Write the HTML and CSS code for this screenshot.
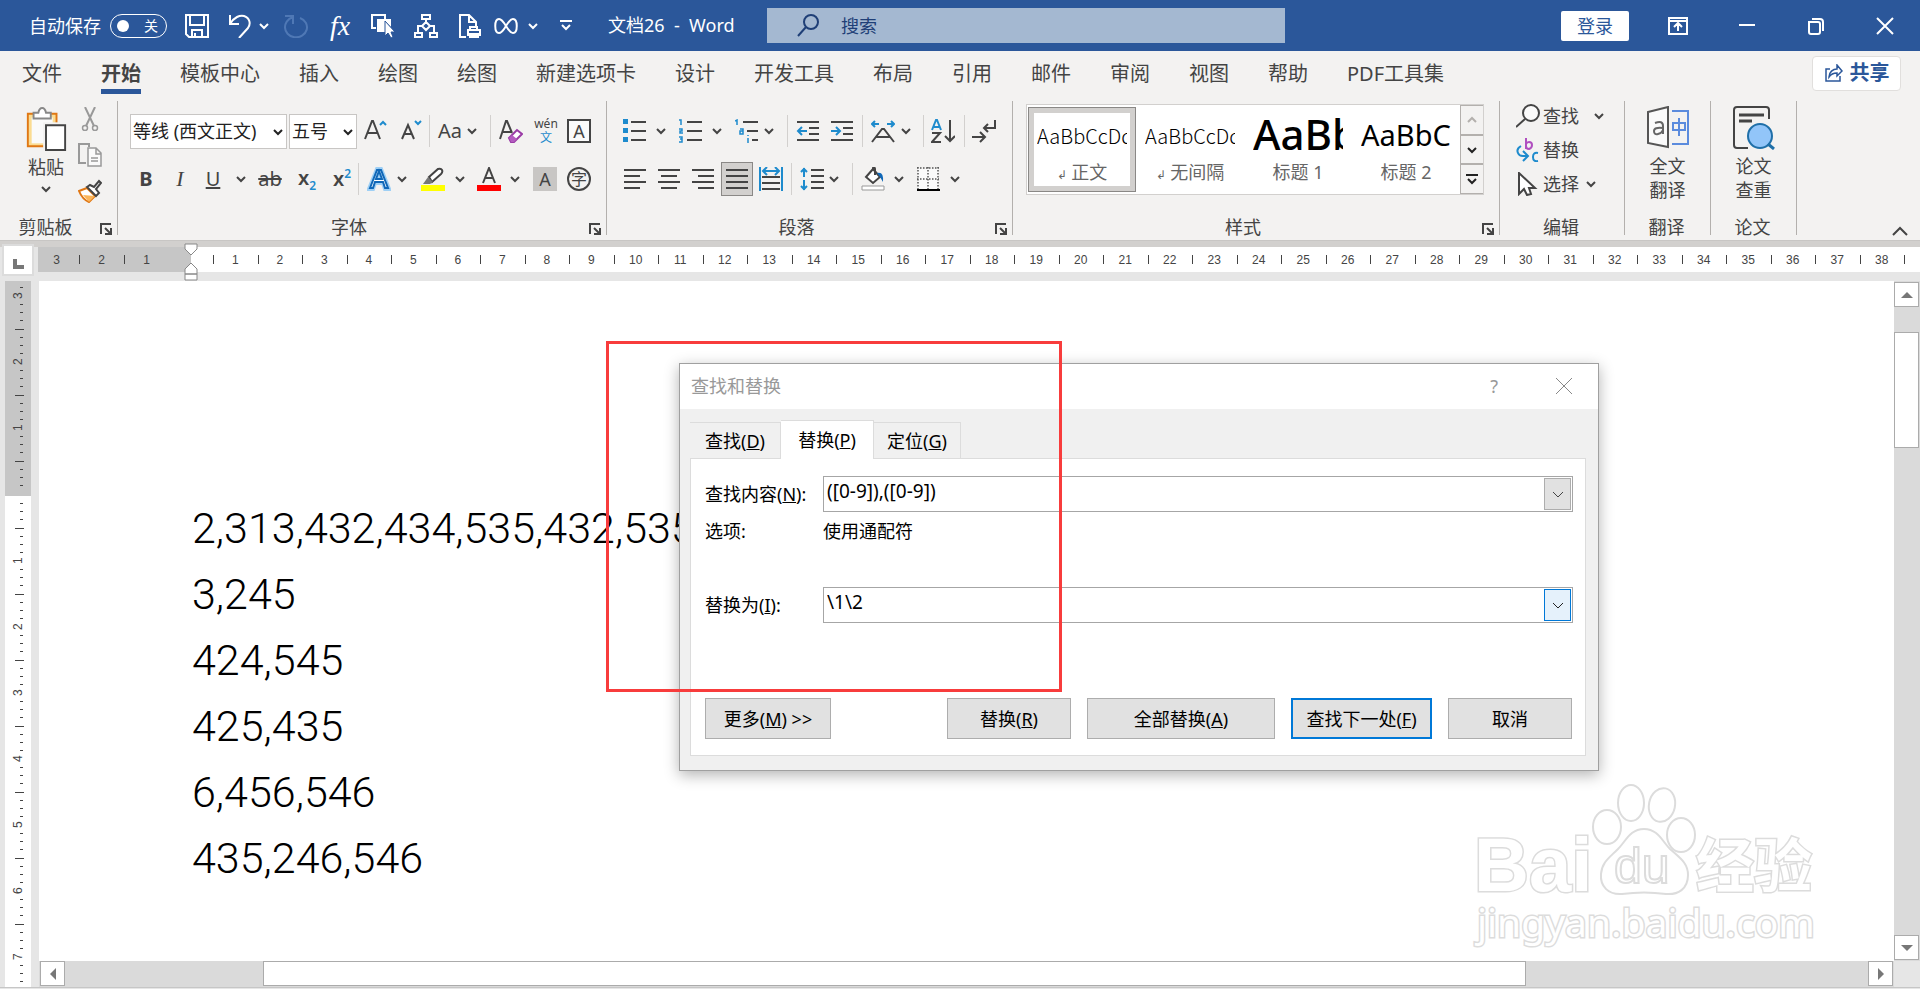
FILE: index.html
```html
<!DOCTYPE html>
<html lang="zh-CN">
<head>
<meta charset="utf-8">
<title>文档26 - Word</title>
<link rel="stylesheet" href="styles.css">
</head>
<body>
<svg class="defs" aria-hidden="true">
  <symbol id="chev" viewBox="0 0 12 12"><path d="M2 4l4 4 4-4" fill="none" stroke="currentColor" stroke-width="2"/></symbol>
  <symbol id="launch" viewBox="0 0 12 12"><path d="M1 11V1h10M5 5l5 5M11 5v6H5" fill="none" stroke="currentColor" stroke-width="2"/></symbol>
</svg>

<header class="titlebar">
  <div class="quick">
    <label class="autosave" for="autosave">自动保存</label>
    <span class="toggle"><input type="checkbox" id="autosave"><span class="knob"></span><span class="state">关</span></span>
    <button aria-label="保存"><svg class="ic" viewBox="0 0 24 24"><path d="M1 1h22v22H4l-3-3zM5 1v10h14V1M7 23v-7h10v7M10 23v-4" fill="none" stroke="#fff" stroke-width="2"/></svg></button>
    <button aria-label="撤消"><svg class="ic" viewBox="0 0 24 24"><path d="M2 1v9h9M2 10C6 3 12 1 16 2c6 2 7 8 4 12l-9 10" fill="none" stroke="#fff" stroke-width="2"/></svg></button>
    <button aria-label="撤消选项"><svg class="ch"><use href="#chev"/></svg></button>
    <button aria-label="恢复"><svg class="ic" viewBox="0 0 24 24"><path d="M1 2h8v8M9 3C3 5 1 10 1 13a11 10 0 1 0 15-9" fill="none" stroke="#4f78b5" stroke-width="2"/></svg></button>
    <button class="fx" aria-label="公式">fx</button>
    <button aria-label="选择对象"><svg class="ic" viewBox="0 0 24 24"><path d="M5 14H1V1h13v4" fill="none" stroke="#fff" stroke-width="2"/><path d="M6 5h14v8l-6-6v11H6z" fill="#fff"/><path d="M14 7v15l3-3 3 5 2-1-2-5h4z" fill="#fff" stroke="#2b579a" stroke-width="1"/></svg></button>
    <button aria-label="组织结构图"><svg class="ic" viewBox="0 0 24 24"><path d="M8 1h8v4H8zM1 19h7v4H1zM16 19h7v4h-7zM12 5v3M12 8l4 4-4 4-4-4zM8 12H4v7M16 12h4v7" fill="none" stroke="#fff" stroke-width="2"/></svg></button>
    <button aria-label="打印预览"><svg class="ic" viewBox="0 0 24 24"><path d="M8 23H2V1h9l7 7v6M11 1v7h7M10 16h12v5H10zM12 16v-3h7v3M12 20h8v3h-8z" fill="none" stroke="#fff" stroke-width="2"/></svg></button>
    <button aria-label="符号"><svg class="ic" viewBox="0 0 24 24"><path d="M12 12C9 7 7 5 5 5c-5 0-5 14 0 14 3 0 5-4 7-7s4-7 7-7c5 0 5 14 0 14-2 0-4-2-7-7z" fill="none" stroke="#fff" stroke-width="2"/></svg></button>
    <button aria-label="符号选项"><svg class="ch"><use href="#chev"/></svg></button>
    <button aria-label="自定义快速访问工具栏"><svg class="ch" viewBox="0 0 12 12"><path d="M0 1h12M2 5l4 4 4-4" fill="none" stroke="#fff" stroke-width="2"/></svg></button>
  </div>
  <h1 class="doc-title">文档26&nbsp; -&nbsp; Word</h1>
  <div class="search">
    <svg class="ic" viewBox="0 0 24 24"><path d="M14 1a7 7 0 1 1 0 14a7 7 0 1 1 0-14zM9 13L1 22" fill="none" stroke="#1f3f77" stroke-width="2"/></svg>
    <input type="text" aria-label="搜索" placeholder="搜索">
  </div>
  <div class="window-tools">
    <button class="login">登录</button>
    <button aria-label="功能区显示选项"><svg class="wi" viewBox="0 0 20 18"><path d="M1 1h18v16H1zM1 4h18M10 14V7M6 10l4-4 4 4" fill="none" stroke="#fff" stroke-width="2"/></svg></button>
    <button aria-label="最小化"><svg class="wi" viewBox="0 0 20 18"><path d="M2 8h16" stroke="#fff" stroke-width="2"/></svg></button>
    <button aria-label="还原"><svg class="wi" viewBox="0 0 20 18"><path d="M3 5h9q2 0 2 2v8q0 2-2 2H5q-2 0-2-2zM6 2h8q3 0 3 3v9" fill="none" stroke="#fff" stroke-width="2"/></svg></button>
    <button aria-label="关闭"><svg class="wi" viewBox="0 0 20 18"><path d="M2 1l16 16M18 1L2 17" stroke="#fff" stroke-width="2"/></svg></button>
  </div>
</header>

<nav class="tabs">
  <a href="#">文件</a><a href="#" class="active">开始</a><a href="#">模板中心</a><a href="#">插入</a><a href="#">绘图</a><a href="#">绘图</a><a href="#">新建选项卡</a><a href="#">设计</a><a href="#">开发工具</a><a href="#">布局</a><a href="#">引用</a><a href="#">邮件</a><a href="#">审阅</a><a href="#">视图</a><a href="#">帮助</a><a href="#">PDF工具集</a>
  <button class="share"><svg class="wi" viewBox="0 0 20 18"><path d="M6 5H2v12h14v-5M5 13c0-5 4-8 8-8V1l5 6-5 5V9c-4 0-6 1-8 4z" fill="none" stroke="#2b579a" stroke-width="1.5"/></svg>共享</button>
</nav>

<section class="ribbon">
  <div class="group clipboard">
    <div class="clip-body">
      <button class="paste"><svg class="big" viewBox="0 0 42 46"><path d="M2 7h30v34H2z" fill="#fbdc92" stroke="#e07714" stroke-width="2"/><path d="M6 11h22v27H6z" fill="#fafafa"/><path d="M8 12V6h5q1-5 4-5t4 5h5v6z" fill="#fff" stroke="#888" stroke-width="2"/><path d="M18 16h24v30H18z" fill="#f3f2f1"/><path d="M21 19h20v26H21z" fill="#fff" stroke="#444" stroke-width="2"/></svg>粘贴<svg class="ch"><use href="#chev"/></svg></button>
      <div class="clip-side">
        <button aria-label="剪切"><svg class="ic" viewBox="0 0 24 24"><path d="M7 0l9 19M17 0L8 19" fill="none" stroke="#999" stroke-width="2"/><circle cx="7" cy="21" r="2.5" fill="none" stroke="#999" stroke-width="1.5"/><circle cx="17" cy="21" r="2.5" fill="none" stroke="#999" stroke-width="1.5"/></svg></button>
        <button aria-label="复制"><svg class="ic" viewBox="0 0 24 24"><path d="M8 20H1V1h10v3" fill="none" stroke="#999" stroke-width="2"/><path d="M10 5h8l5 5v13H10zM18 5v6h5M13 15h7M13 18h7" fill="#fafafa" stroke="#999" stroke-width="1.5"/></svg></button>
        <button aria-label="格式刷"><svg class="ic" viewBox="0 0 24 24"><path d="M1 12l8-3 8 8-6 6c-5-2-8-6-10-11z" fill="#fff" stroke="#e07714" stroke-width="2"/><path d="M5 16l12 1-6 6z" fill="#fbb55a"/><path d="M9 8l3-2 4 2 5-6 2 2-5 6 3 4-3 3z" fill="#fff" stroke="#444" stroke-width="2"/></svg></button>
      </div>
    </div>
    <div class="caption"><span>剪贴板</span><button aria-label="剪贴板设置"><svg class="ch"><use href="#launch"/></svg></button></div>
  </div>

  <div class="group font">
    <div class="row font-1">
      <span class="combo"><select aria-label="字体"><option>等线 (西文正文)</option></select><svg class="ch"><use href="#chev"/></svg></span>
      <span class="combo small"><select aria-label="字号"><option>五号</option></select><svg class="ch"><use href="#chev"/></svg></span>
      <button aria-label="增大字号"><svg class="ic" viewBox="0 0 24 24"><path d="M1 20L8 2h1l7 18M4 14h9" fill="none" stroke="#444" stroke-width="2"/><path d="M16 6l3-3 3 3" fill="none" stroke="#1e8bcd" stroke-width="2"/></svg></button>
      <button aria-label="减小字号"><svg class="ic" viewBox="0 0 24 24"><path d="M2 20L8 6l6 14M4 15h8" fill="none" stroke="#444" stroke-width="2"/><path d="M15 2l3 3 3-3" fill="none" stroke="#1e8bcd" stroke-width="2"/></svg></button>
      <i class="sep"></i><i></i>
      <button class="glyph case" aria-label="更改大小写">Aa<svg class="ch"><use href="#chev"/></svg></button>
      <i class="sep"></i><i></i>
      <button aria-label="清除格式"><svg class="ic" viewBox="0 0 24 24"><path d="M1 20L7 2h1l5 12M4 13h8" fill="none" stroke="#444" stroke-width="2"/><path d="M10 19l8-8 5 4-8 8h-3z" fill="#fff" stroke="#9a3ba6" stroke-width="2"/><path d="M10 19l3-3 5 4-3 3h-3z" fill="#b45cc0"/></svg></button>
      <button class="pinyin" aria-label="拼音指南"><span>wén</span><b>文</b></button>
      <button class="boxed" aria-label="字符边框">A</button>
    </div>
    <div class="row font-2">
      <button class="glyph bold" aria-label="加粗">B</button>
      <button class="glyph ital" aria-label="倾斜">I</button>
      <button class="glyph" aria-label="下划线"><u>U</u></button>
      <button aria-label="下划线选项"><svg class="ch"><use href="#chev"/></svg></button>
      <button class="glyph" aria-label="删除线"><s>ab</s></button>
      <button class="glyph script" aria-label="下标">x<sub>2</sub></button>
      <button class="glyph script" aria-label="上标">x<sup>2</sup></button>
      <i class="sep"></i><i></i>
      <button aria-label="文本效果"><svg class="ic" viewBox="0 0 24 24"><path d="M2 22L10 2h4l8 20h-4l-2-6H8l-2 6zM9 13h6L12 5z" fill="#fff" stroke="#9fd0f5" stroke-width="4"/><path d="M3 21L10 3h4l7 18h-3l-2-6H8l-2 6zM9 12h6L12 4z" fill="#fff" stroke="#1068b8" stroke-width="2"/></svg></button>
      <button aria-label="文本效果选项"><svg class="ch"><use href="#chev"/></svg></button>
      <button aria-label="突出显示"><svg class="ic" viewBox="0 0 24 24"><path d="M0 18h24v6H0z" fill="#ff0"/><path d="M8 10l9-8q3-1 4 1t-1 4l-9 8z" fill="#fff" stroke="#444" stroke-width="2"/><path d="M7 10l5 5-3 2H2z" fill="#777"/></svg></button>
      <button aria-label="突出显示选项"><svg class="ch"><use href="#chev"/></svg></button>
      <button aria-label="字体颜色"><svg class="ic" viewBox="0 0 24 24"><path d="M0 18h24v6H0z" fill="red"/><path d="M6 16L12 1l6 15M8 11h8" fill="none" stroke="#444" stroke-width="2"/></svg></button>
      <button aria-label="字体颜色选项"><svg class="ch"><use href="#chev"/></svg></button>
      <button class="shaded" aria-label="字符底纹">A</button>
      <button class="circled" aria-label="带圈字符">字</button>
    </div>
    <div class="caption"><span>字体</span><button aria-label="字体设置"><svg class="ch"><use href="#launch"/></svg></button></div>
  </div>

  <div class="group para">
    <div class="row para-1">
      <button aria-label="项目符号"><svg class="ic" viewBox="0 0 24 24"><path d="M0 0h5v5H0zM0 9h5v5H0zM0 18h5v5H0z" fill="#1e8bcd"/><path d="M8 3h15M8 12h15M8 21h15" stroke="#444" stroke-width="2"/></svg></button>
      <button aria-label="项目符号选项"><svg class="ch"><use href="#chev"/></svg></button>
      <button aria-label="编号"><svg class="ic" viewBox="0 0 24 24"><path d="M0 1h2v5M0 10h3v2H1v2h3M0 18h3v5H0M1 20h2" fill="none" stroke="#1e8bcd" stroke-width="1.5"/><path d="M8 3h15M8 12h15M8 21h15" stroke="#444" stroke-width="2"/></svg></button>
      <button aria-label="编号选项"><svg class="ch"><use href="#chev"/></svg></button>
      <button aria-label="多级列表"><svg class="ic" viewBox="0 0 24 24"><path d="M0 2l2-1v5M5 10h3v5H5v-3h3M13 19v5M13 16v1" fill="none" stroke="#1e8bcd" stroke-width="1.5"/><path d="M8 3h15M12 12h11M17 21h6" stroke="#444" stroke-width="2"/></svg></button>
      <button aria-label="多级列表选项"><svg class="ch"><use href="#chev"/></svg></button>
      <i class="sep"></i><i></i>
      <button aria-label="减少缩进量"><svg class="ic" viewBox="0 0 24 24"><path d="M1 3h22M13 9h10M13 15h10M1 21h22" stroke="#444" stroke-width="2"/><path d="M11 12H2M6 8l-4 4 4 4" fill="none" stroke="#1e8bcd" stroke-width="2"/></svg></button>
      <button aria-label="增加缩进量"><svg class="ic" viewBox="0 0 24 24"><path d="M1 3h22M13 9h10M13 15h10M1 21h22" stroke="#444" stroke-width="2"/><path d="M1 12h9M6 8l4 4-4 4" fill="none" stroke="#1e8bcd" stroke-width="2"/></svg></button>
      <i class="sep"></i><i></i>
      <button aria-label="中文版式"><svg class="ic" viewBox="0 0 24 24"><path d="M1 23L11 10h2l10 13M5 18h14" fill="none" stroke="#444" stroke-width="2"/><path d="M8 5H1M4 2L1 5l3 3M16 5h7M20 2l3 3-3 3" fill="none" stroke="#1e8bcd" stroke-width="2"/></svg></button>
      <button aria-label="中文版式选项"><svg class="ch"><use href="#chev"/></svg></button>
      <i class="sep"></i><i></i>
      <button aria-label="排序"><svg class="ic" viewBox="0 0 24 24"><path d="M1 11L5 1h1l4 10M3 8h5" fill="none" stroke="#1e8bcd" stroke-width="2"/><path d="M1 14h8l-8 9h9M19 1v21M14 17l5 5 5-5" fill="none" stroke="#444" stroke-width="2"/></svg></button>
      <i class="sep"></i><i></i>
      <button aria-label="显示编辑标记"><svg class="ic" viewBox="0 0 24 24"><path d="M23 1v8H12M16 5l-4 4 4 4M0 18h12M8 13l5 5-5 5" fill="none" stroke="#444" stroke-width="2"/></svg></button>
    </div>
    <div class="row para-2">
      <button aria-label="左对齐"><svg class="ic" viewBox="0 0 24 24"><path d="M1 3h22M1 9h16M1 15h22M1 21h16" stroke="#444" stroke-width="2"/></svg></button>
      <button aria-label="居中"><svg class="ic" viewBox="0 0 24 24"><path d="M1 3h22M4 9h16M1 15h22M4 21h16" stroke="#444" stroke-width="2"/></svg></button>
      <button aria-label="右对齐"><svg class="ic" viewBox="0 0 24 24"><path d="M1 3h22M7 9h16M1 15h22M7 21h16" stroke="#444" stroke-width="2"/></svg></button>
      <button class="pressed" aria-label="两端对齐"><svg class="ic" viewBox="0 0 24 24"><path d="M1 3h22M1 9h22M1 15h22M1 21h22" stroke="#444" stroke-width="2"/></svg></button>
      <button aria-label="分散对齐"><svg class="ic" viewBox="0 0 24 24"><path d="M3 10h18M3 16h18M3 22h18" stroke="#444" stroke-width="2"/><path d="M1 0v24M23 0v24M4 4h16M8 0L4 4l4 4M16 0l4 4-4 4" fill="none" stroke="#1e8bcd" stroke-width="2"/></svg></button>
      <i class="sep"></i><i></i>
      <button aria-label="行距"><svg class="ic" viewBox="0 0 24 24"><path d="M11 3h13M11 9h13M11 15h13M11 21h13" stroke="#444" stroke-width="2"/><path d="M4 1v9M1 5l3-3 3 3M4 13v10M1 19l3 3 3-3" fill="none" stroke="#1e8bcd" stroke-width="2"/></svg></button>
      <button aria-label="行距选项"><svg class="ch"><use href="#chev"/></svg></button>
      <i class="sep"></i><i></i>
      <button aria-label="底纹"><svg class="ic" viewBox="0 0 24 24"><path d="M12 2l7 8-7 6-7-6 7-8V1q2-1 2 1v6" fill="#fff" stroke="#444" stroke-width="2"/><path d="M16 6q7-2 6 9l-3-5z" fill="#1068b8"/><path d="M1 19h22v4H1z" fill="#fff" stroke="#999"/></svg></button>
      <button aria-label="底纹选项"><svg class="ch"><use href="#chev"/></svg></button>
      <button aria-label="边框"><svg class="ic" viewBox="0 0 24 24"><path d="M2 2h20v20H2z" fill="#fafafa"/><path d="M1 1h22M1 12h22M2 0v22M12 0v22M22 0v22" fill="none" stroke="#555" stroke-width="1.5" stroke-dasharray="1.5 1.5"/><path d="M1 23h23" stroke="#000" stroke-width="2"/></svg></button>
      <button aria-label="边框选项"><svg class="ch"><use href="#chev"/></svg></button>
    </div>
    <div class="caption"><span>段落</span><button aria-label="段落设置"><svg class="ch"><use href="#launch"/></svg></button></div>
  </div>

  <div class="group styles">
    <div class="gallery">
      <button class="style selected"><span class="preview">AaBbCcDd</span><span class="name"><small>↲</small> 正文</span></button>
      <button class="style"><span class="preview">AaBbCcDd</span><span class="name"><small>↲</small> 无间隔</span></button>
      <button class="style"><span class="preview h1">AaBb</span><span class="name">标题 1</span></button>
      <button class="style"><span class="preview h2">AaBbC</span><span class="name">标题 2</span></button>
      <div class="gallery-nav">
        <button class="off" aria-label="上一行"><svg class="ch up"><use href="#chev"/></svg></button>
        <button aria-label="下一行"><svg class="ch"><use href="#chev"/></svg></button>
        <button aria-label="其他样式"><svg class="ch" viewBox="0 0 12 12"><path d="M0 2h12M2 6l4 4 4-4" fill="none" stroke="currentColor" stroke-width="2"/></svg></button>
      </div>
    </div>
    <div class="caption"><span>样式</span><button aria-label="样式设置"><svg class="ch"><use href="#launch"/></svg></button></div>
  </div>

  <div class="group edit">
    <div class="edit-list">
      <button><svg class="ic" viewBox="0 0 24 24"><circle cx="15" cy="9" r="8" fill="#fafafa" stroke="#444" stroke-width="2"/><path d="M9 15l-9 8" stroke="#444" stroke-width="2"/></svg>查找<svg class="ch far"><use href="#chev"/></svg></button>
      <button><svg class="ic" viewBox="0 0 24 24"><path d="M10 0v11M10 6q1-2 3-2 3 0 3 3t-3 4q-3 0-3-3" fill="none" stroke="#b04fc0" stroke-width="2"/><path d="M5 8q-5 3-3 7 1 3 5 3h4M7 13l5 5-5 5M22 15q-5-1-5 4t5 4" fill="none" stroke="#1e8bcd" stroke-width="2"/></svg>替换</button>
      <button><svg class="ic" viewBox="0 0 24 24"><path d="M3 1v21l5-5 3 6 4-1-2-6h6z" fill="#fff" stroke="#444" stroke-width="2"/></svg>选择<svg class="ch near"><use href="#chev"/></svg></button>
    </div>
    <div class="caption"><span>编辑</span></div>
  </div>

  <div class="group tool">
    <button class="tool-btn"><svg class="big" viewBox="0 0 42 44"><path d="M1 6l20-5v40L1 37z" fill="#fafafa" stroke="#555" stroke-width="2"/><path d="M8 17q8-3 8 3v8M16 22q-9-1-9 3t4 3 5-4" fill="none" stroke="#666" stroke-width="2"/><path d="M25 5h16v33H25M26 17h12v7H26zM32 12v18" fill="none" stroke="#5b8bdd" stroke-width="2"/></svg><span>全文</span><span>翻译</span></button>
    <div class="caption"><span>翻译</span></div>
  </div>
  <div class="group tool">
    <button class="tool-btn"><svg class="big" viewBox="0 0 42 44"><path d="M15 42H4q-3 0-3-3V4q0-3 3-3h29q3 0 3 3v9" fill="none" stroke="#444" stroke-width="2"/><path d="M6 9h25M6 15h13" stroke="#444" stroke-width="3"/><circle cx="27" cy="30" r="12" fill="#92c5f9" stroke="#1f6fa8" stroke-width="2"/><path d="M35 38l6 5" stroke="#1f6fa8" stroke-width="3"/></svg><span>论文</span><span>查重</span></button>
    <div class="caption"><span>论文</span></div>
  </div>
  <button class="collapse" aria-label="折叠功能区"><svg class="wi" viewBox="0 0 20 18"><path d="M3 15l7-7 7 7" fill="none" stroke="#444" stroke-width="2"/></svg></button>
</section>

<div class="ruler">
  <div class="tab-stop"><svg viewBox="0 0 12 12"><path d="M2 1v8h9" fill="none" stroke="#777" stroke-width="4"/></svg></div>
  <div class="r-margin"><span>3</span><span>2</span><span>1</span><i></i></div>
  <div class="r-body"><span>1</span><span>2</span><span>3</span><span>4</span><span>5</span><span>6</span><span>7</span><span>8</span><span>9</span><span>10</span><span>11</span><span>12</span><span>13</span><span>14</span><span>15</span><span>16</span><span>17</span><span>18</span><span>19</span><span>20</span><span>21</span><span>22</span><span>23</span><span>24</span><span>25</span><span>26</span><span>27</span><span>28</span><span>29</span><span>30</span><span>31</span><span>32</span><span>33</span><span>34</span><span>35</span><span>36</span><span>37</span><span>38</span><i></i></div>
  <svg class="indent" viewBox="0 0 14 38"><path d="M1 1h12v5l-6 6-6-6zM1 26l6-6 6 6v5H1zM1 31h12v6H1z" fill="#fff" stroke="#888"/></svg>
</div>

<main class="workspace">
  <div class="v-ruler">
    <div class="v-margin"><span>3</span><span>2</span><span>1</span><span class="half"></span></div>
    <div class="v-body"><div class="v-start"><span></span></div><span>1</span><span>2</span><span>3</span><span>4</span><span>5</span><span>6</span><span>7</span></div>
  </div>
  <article class="page">
    <p>2,313,432,434,535,432,535</p>
    <p>3,245</p>
    <p>424,545</p>
    <p>425,435</p>
    <p>6,456,546</p>
    <p>435,246,546</p>

    <svg class="watermark" viewBox="0 0 360 180">
      <g fill="#fff" stroke="#dcdcdc" stroke-width="2">
        <ellipse cx="137" cy="54" rx="14" ry="17"/>
        <ellipse cx="161" cy="30" rx="13" ry="18"/>
        <ellipse cx="192" cy="32" rx="13" ry="17" transform="rotate(12 192 32)"/>
        <ellipse cx="211" cy="62" rx="14" ry="17"/>
        <path d="M174 56c14 0 18 12 26 20 10 9 18 14 18 26 0 14-10 20-22 19-14-2-30-2-44 0-14 1-22-8-21-20 1-12 8-16 17-25 8-8 12-20 26-20z"/>
        <g paint-order="stroke" stroke-width="3">
          <text class="wm-latin" x="4" y="118">Bai</text>
          <text class="wm-cjk" x="226" y="114">经验</text>
          <text class="wm-url" x="7" y="164">jingyan.baidu.com</text>
        </g>
        <text class="wm-du" x="144" y="110">du</text>
      </g>
    </svg>

    <section class="dialog" role="dialog" aria-label="查找和替换">
      <div class="dlg-title"><span>查找和替换</span><button aria-label="帮助">?</button><button aria-label="关闭"><svg class="wi" viewBox="0 0 20 18"><path d="M2 1l16 16M18 1L2 17" stroke="#888" stroke-width="1"/></svg></button></div>
      <div class="dlg-body">
        <div class="dlg-tabs"><button>查找(<u>D</u>)</button><button class="on">替换(<u>P</u>)</button><button>定位(<u>G</u>)</button></div>
        <div class="panel">
          <div class="field"><label for="find">查找内容(<u>N</u>):</label><span class="box"><input id="find" type="text" value="([0-9]),([0-9])"><button aria-label="查找历史"><svg class="ch" viewBox="0 0 12 12"><path d="M1 4l5 5 5-5" fill="none" stroke="#444"/></svg></button></span></div>
          <div class="options"><span>选项:</span><span>使用通配符</span></div>
          <div class="field"><label for="repl">替换为(<u>I</u>):</label><span class="box hot"><input id="repl" type="text" value="\1\2"><button aria-label="替换历史"><svg class="ch" viewBox="0 0 12 12"><path d="M1 4l5 5 5-5" fill="none" stroke="#222"/></svg></button></span></div>
          <div class="actions"><button>更多(<u>M</u>) &gt;&gt;</button><button>替换(<u>R</u>)</button><button>全部替换(<u>A</u>)</button><button class="primary">查找下一处(<u>F</u>)</button><button>取消</button></div>
        </div>
      </div>
    </section>
    <div class="highlight"></div>
  </article>
  <div class="v-scroll"><button aria-label="向上"><svg viewBox="0 0 12 12"><path d="M0 9l6-6 6 6z" fill="#777"/></svg></button><i class="thumb"></i><button class="end" aria-label="向下"><svg viewBox="0 0 12 12"><path d="M0 3l6 6 6-6z" fill="#777"/></svg></button></div>
  <div class="h-scroll"><button aria-label="向左"><svg viewBox="0 0 12 12"><path d="M9 0L3 6l6 6z" fill="#777"/></svg></button><i class="space"></i><i class="thumb"></i><i class="rest"></i><button aria-label="向右"><svg viewBox="0 0 12 12"><path d="M3 0l6 6-6 6z" fill="#777"/></svg></button></div>
</main>
<footer class="status"></footer>
</body>
</html>
```

FILE: styles.css
```css
* { box-sizing: border-box; }
body {
  margin: 0;
  height: 100vh;
  display: flex;
  flex-direction: column;
  overflow: hidden;
  background: #e6e6e6;
  color: #444;
  font: 18px/24px "Noto Sans", "Noto Sans CJK SC", sans-serif;
}
button, input, select { font: inherit; color: inherit; }
button { background: none; border: 0; padding: 0; text-align: left; }
i { display: block; }
svg { display: block; flex: none; }
.defs { position: absolute; width: 0; height: 0; }
.ic { width: 24px; height: 24px; }
.ch { width: 12px; height: 12px; }
.wi { width: 20px; height: 18px; }
.big { width: 42px; height: 44px; }

/* title bar */
.titlebar { height: 51px; flex: none; display: flex; align-items: center; background: #2b579a; color: #fff; }
.quick {
  flex: none;
  display: grid;
  align-items: center;
  padding-left: 29px;
  grid-template-columns: 81px 75px 43px 30px 26px 46px 41px 43px 44px 36px 33px 33px 48px;
}
.autosave { white-space: nowrap; }
.toggle { position: relative; width: 57px; height: 24px; border: 1px solid #fff; border-radius: 12px; display: flex; align-items: center; justify-content: space-between; padding: 0 8px 0 6px; font-size: 14px; }
.toggle input { position: absolute; inset: 0; margin: 0; opacity: 0; }
.knob { width: 12px; height: 12px; border-radius: 6px; background: #fff; }
.fx { font: italic 28px/24px "Liberation Serif", serif; }
.doc-title { flex: none; width: 159px; margin: 0; padding-bottom: 2px; font-size: 18px; font-weight: 400; white-space: nowrap; }
.search { flex: 0 1 518px; height: 35px; display: flex; align-items: center; gap: 20px; padding-left: 30px; background: #a4b8d1; }
.search input { flex: 1; min-width: 0; border: 0; padding: 0; background: none; }
.search input::placeholder { color: #1f3f77; opacity: 1; }
.window-tools { margin-left: auto; padding-right: 25px; display: flex; align-items: center; gap: 49px; }
.login { height: 30px; width: 68px; margin-right: -10px; border-radius: 2px; background: #fff; color: #2b579a; text-align: center; }

/* tabs */
.tabs { height: 44px; flex: none; display: flex; align-items: center; gap: 39px; padding: 0 19px 0 22px; background: #f3f2f1; font-size: 20px; white-space: nowrap; }
.tabs a { color: #444; text-decoration: none; line-height: 30px; padding-top: 6px; border-bottom: 5px solid transparent; }
.tabs a.active { font-weight: 700; border-color: #2b579a; }
.share { margin-left: auto; width: 89px; height: 35px; border: 1px solid #e1dfdd; border-radius: 4px; background: #fff; color: #2b579a; font-weight: 700; display: flex; align-items: center; justify-content: center; gap: 6px; }

/* ribbon */
.ribbon { height: 146px; flex: none; display: flex; align-items: flex-start; padding-top: 6px; background: #f3f2f1; border-bottom: 1px solid #c8c6c4; }
.group { height: 134px; flex: none; display: flex; flex-direction: column; border-right: 1px solid #b3b0ad; }
.clipboard { width: 118px; }
.font { width: 489px; }
.para { width: 406px; }
.styles { width: 487px; }
.edit { width: 125px; }
.tool { width: 86px; }
.caption { margin-top: auto; height: 16px; display: flex; align-items: center; position: relative; justify-content: center; padding-right: 26px; }
.caption button { position: absolute; right: 5px; bottom: 0; }

.clip-body { display: flex; padding: 6px 0 0 25px; gap: 11px; }
.paste { width: 42px; display: flex; flex-direction: column; align-items: center; gap: 4px; white-space: nowrap; }
.clip-side { display: flex; flex-direction: column; gap: 12px; }

.row { height: 36px; display: grid; align-items: center; }
.group > .row:first-child { margin: 12px 0; }
.sep { width: 1px; height: 32px; background: #d2d0ce; }
.font-1 { padding-left: 12px; grid-template-columns: 159px 75px 36px 29px 1px 8px 52px 1px 8px 35px 33px 24px; }
.font-2 { padding-left: 16px; grid-template-columns: 34px 33px 34px 23px 37px 35px 28px 1px 8px 29px 25px 33px 23px 32px 24px 34px 24px; }
.para-1 { padding-left: 16px; grid-template-columns: 32px 24px 32px 24px 28px 24px 1px 8px 34px 32px 1px 8px 29px 23px 1px 7px 33px 1px 7px 26px; }
.para-2 { padding-left: 16px; grid-template-columns: 34px 34px 30px 38px 32px 1px 8px 28px 24px 1px 8px 32px 23px 33px 12px; }
.combo { position: relative; width: 157px; height: 35px; }
.combo.small { width: 68px; }
.combo select { appearance: none; width: 100%; height: 100%; padding: 0 0 0 2px; border: 1px solid #c8c6c4; border-radius: 0; background: #fff; color: #222; }
.combo .ch { position: absolute; right: 3px; top: 12px; color: #222; }
.glyph { width: 24px; font-size: 20px; text-align: center; white-space: nowrap; }
.case { width: 42px; display: flex; align-items: center; gap: 4px; }
.bold { font-weight: 700; }
.ital { font-family: "Liberation Serif", serif; font-style: italic; font-size: 22px; }
.script { font-weight: 600; }
.script sub, .script sup { color: #1e8bcd; font-size: 12px; line-height: 12px; }
.pinyin { width: 24px; text-align: center; font-size: 12px; line-height: 14px; }
.pinyin span, .pinyin b { display: block; }
.pinyin b { color: #1e8bcd; font-weight: 400; }
.boxed, .shaded, .circled { width: 24px; height: 24px; line-height: 20px; text-align: center; }
.boxed { border: 2px solid #444; background: #fafafa; }
.shaded { background: #c8c6c4; line-height: 24px; }
.circled { border: 2px solid #444; border-radius: 12px; font-size: 16px; }
.pressed { width: 32px; height: 34px; border: 1px solid #8a8886; background: #d2d0ce; display: flex; align-items: center; justify-content: center; }

.gallery { margin: 3px 0 0 13px; width: 458px; height: 91px; display: flex; padding-left: 1px; border: 1px solid #d2d0ce; background: #fff; }
.style { width: 108px; margin: 2px 0; padding: 5px 9px 0; display: flex; flex-direction: column; }
.style.selected { border: 1px solid #8a8886; box-shadow: inset 0 0 0 5px #d2d0ce; padding: 4px 8px 0; }
.preview { width: 90px; height: 48px; overflow: hidden; color: #000; font: 300 20px/48px "Noto Sans CJK SC", sans-serif; }
.preview.h1 { font: 500 42px/44px "Noto Sans", sans-serif; }
.preview.h2 { font: 400 29px/46px "Noto Sans", sans-serif; }
.name { width: 90px; text-align: center; color: #666; white-space: nowrap; }
.name small { font-size: 12px; }
.gallery-nav { margin-left: auto; width: 23px; display: flex; flex-direction: column; }
.gallery-nav button { flex: 1; display: flex; align-items: center; justify-content: center; border: 1px solid #b3b0ad; border-right: 0; color: #222; background: #f3f2f1; }
.gallery-nav .off { color: #b3b0ad; }
.up { transform: rotate(180deg); }

.edit-list { padding: 3px 0 0 16px; display: flex; flex-direction: column; gap: 10px; }
.edit-list button { display: flex; align-items: center; gap: 3px; }
.far { margin-left: 11px; }
.near { margin-left: 3px; }
.edit .caption, .tool .caption { padding-right: 2px; }
.tool-btn { padding-top: 5px; display: flex; flex-direction: column; align-items: center; line-height: 24px; }
.tool-btn .big { margin-bottom: 4px; }
.collapse { margin: 119px 10px 0 auto; }

/* horizontal ruler */
.ruler { position: relative; height: 40px; flex: none; display: flex; padding: 6px 0 9px 38px; background: linear-gradient(#d2d0ce 0 6px, #e6e6e6 6px); font: 12px/27px "Liberation Sans", sans-serif; }
.tab-stop { position: absolute; left: 2px; top: 3px; width: 32px; height: 32px; padding: 12px 9px; border: 2px solid #dcdcdc; background: #fff; }
.tab-stop svg { width: 12px; height: 12px; }
.r-margin { width: 153px; padding-right: 22px; background: #c6c6c6; display: flex; justify-content: flex-end; overflow: hidden; }
.r-margin span { flex: none; width: 45px; }
.r-body { flex: 1; padding: 0 16px 0 22px; background: #fff; display: grid; grid-template-columns: repeat(38, 1fr) 0; grid-template-rows: 25px; }
.r-margin span, .r-body span { text-align: center; background: linear-gradient(#444, #444) 0 50% / 1px 9px no-repeat; }
.r-margin i, .r-body i { width: 1px; background: linear-gradient(#444, #444) 0 50% / 1px 9px no-repeat; }
.indent { position: absolute; left: 184px; top: 2px; width: 14px; height: 38px; z-index: 1; }

/* workspace */
.workspace { flex: 1; min-height: 0; display: grid; grid-template-columns: 39px 1fr 26px; grid-template-rows: 1fr 26px; }
.v-ruler { grid-row: 1 / 3; margin: 0 8px 0 5px; display: flex; flex-direction: column; overflow: hidden; font: 12px/26px "Liberation Sans", sans-serif; }
.v-margin { height: 215px; flex: none; display: flex; flex-direction: column; justify-content: flex-end; overflow: hidden; background: #c6c6c6; }
.v-body { flex: 1; background: #fff; }
.v-start { height: 32px; display: flex; flex-direction: column; justify-content: flex-end; overflow: hidden; }
.v-ruler span {
  display: block; flex: none; height: 66px; width: 26px; text-align: center;
  writing-mode: vertical-rl; transform: rotate(180deg);
  background:
    linear-gradient(#444, #444) 7px 65px / 9px 1px,
    linear-gradient(#444, #444) 8px 57px / 3px 1px,
    linear-gradient(#444, #444) 8px 49px / 3px 1px,
    linear-gradient(#444, #444) 8px 41px / 3px 1px,
    linear-gradient(#444, #444) 8px 24px / 3px 1px,
    linear-gradient(#444, #444) 8px 16px / 3px 1px,
    linear-gradient(#444, #444) 8px 8px / 3px 1px;
  background-repeat: no-repeat;
}
.v-ruler .half { height: 35px; background-position: 7px 34px, 8px 26px, 8px 18px, 8px 10px, 8px -9px, 8px -9px, 8px -9px; }
.page { position: relative; padding: 214px 0 0 153px; background: #fff; overflow: hidden; color: #000; font: 300 43px/66px Roboto, sans-serif; }
.page p { margin: 0; }

/* scroll bars */
.v-scroll, .h-scroll { display: flex; background: #dadada; }
.v-scroll { flex-direction: column; padding: 1px 1px 1px 0; }
.h-scroll { grid-column: 2; padding: 0 1px; }
.v-scroll button, .h-scroll button { flex: none; width: 25px; height: 25px; display: flex; align-items: center; justify-content: center; border: 1px solid #ababab; background: #fff; }
.v-scroll svg, .h-scroll svg { width: 12px; height: 12px; }
.thumb { border: 1px solid #ababab; background: #fff; }
.v-scroll .thumb { height: 116px; margin-top: 25px; }
.v-scroll .end { margin-top: auto; }
.h-scroll .space { flex: 198; }
.h-scroll .thumb { flex: 1263; height: 25px; }
.h-scroll .rest { flex: 342; }
.status { height: 2px; flex: none; border-top: 1px solid #c6c6c6; }

/* find and replace */
.dialog { position: absolute; left: 640px; top: 82px; width: 920px; border: 1px solid #a0a0a0; background: #f0f0f0; box-shadow: 0 4px 14px rgba(0, 0, 0, .3); font: 18px/24px "Noto Sans", "Noto Sans CJK SC", sans-serif; }
.dlg-title { height: 45px; display: flex; align-items: center; gap: 56px; padding: 0 24px 2px 11px; background: #fff; color: #999; }
.dlg-title span { margin-right: auto; }
.dlg-body { padding: 11px 12px 14px 10px; }
.dlg-tabs { display: flex; align-items: flex-end; }
.dlg-tabs button { width: 91px; height: 36px; text-align: center; border: 1px solid #dcdcdc; border-width: 1px 1px 0 0; }
.dlg-tabs .on { width: 93px; height: 39px; margin-bottom: -1px; background: #fff; z-index: 1; }
.dlg-tabs button:last-child { width: 87px; }
.panel { border: 1px solid #dcdcdc; background: #fff; padding: 17px 12px 16px 14px; }
.field { display: flex; align-items: center; }
.field label, .options span:first-child { width: 118px; flex: none; }
.box { flex: 1; height: 36px; display: flex; border: 1px solid #a6a6a6; padding: 1px; }
.box input { flex: 1; min-width: 0; border: 0; padding: 0 2px 6px; outline: 0; font-size: 19px; }
.box button { width: 27px; display: flex; align-items: center; justify-content: center; border: 1px solid #adadad; background: #e1e1e1; }
.box.hot button { border-color: #0078d7; background: #e5f1fb; }
.options { display: flex; margin: 7px 0 44px; }
.actions { display: flex; gap: 16px; margin-top: 75px; padding-right: 1px; }
.actions button { height: 41px; flex: 0 0 124px; text-align: center; border: 1px solid #adadad; background: #e1e1e1; }
.actions button:first-child { flex-basis: 126px; margin-right: auto; }
.actions button:nth-child(3) { flex-basis: 188px; }
.actions .primary { flex-basis: 141px; border: 2px solid #0078d7; }
.highlight { position: absolute; left: 567px; top: 60px; width: 456px; height: 351px; border: 3px solid #f83c3c; pointer-events: none; }

.watermark { position: absolute; right: 64px; bottom: 8px; width: 360px; height: 180px; }
.wm-latin { font: 700 76px "Liberation Sans", sans-serif; }
.wm-cjk { font: 700 58px "Noto Sans CJK SC", sans-serif; }
.wm-url { font: 400 39px "Noto Sans", sans-serif; }
.wm-du { font: 400 50px "Liberation Sans", sans-serif; }
```
